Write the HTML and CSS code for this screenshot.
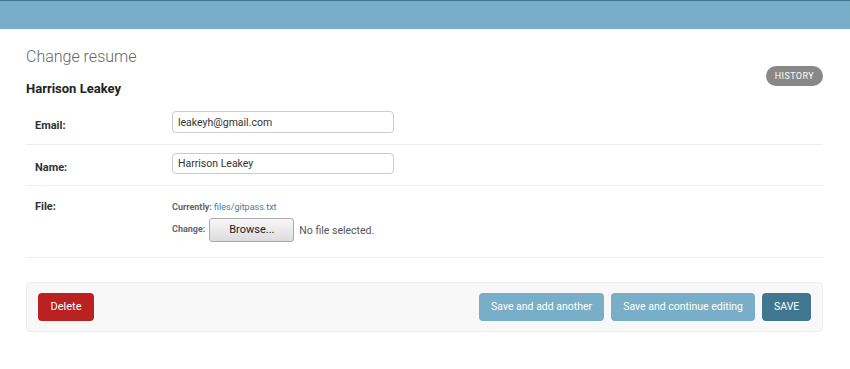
FILE: index.html
```html
<!DOCTYPE html>
<html>
<head>
<meta charset="utf-8">
<link rel="stylesheet" href="styles.css">
</head>
<body>
<div class="header"></div>
<div class="content">
  <h1 class="title">Change resume</h1>
  <div class="tools"><a class="history">History</a></div>
  <h2 class="subhead">Harrison Leakey</h2>
  <div class="fieldset">
    <div class="row">
      <label class="label">Email:</label>
      <input class="input" type="text" value="leakeyh@gmail.com">
    </div>
    <div class="row">
      <label class="label">Name:</label>
      <input class="input input-short" type="text" value="Harrison Leakey">
    </div>
    <div class="row row-file">
      <label class="label">File:</label>
      <div class="file">
        <div class="current"><span class="small-label">Currently:</span> <a class="link">files/gitpass.txt</a></div>
        <div class="change"><span class="small-label">Change:</span><span class="browse">Browse...</span><span class="nofile">No file selected.</span></div>
      </div>
    </div>
  </div>
  <div class="submit-row">
    <a class="btn delete">Delete</a>
    <div class="spacer"></div>
    <a class="btn light">Save and add another</a>
    <a class="btn light">Save and continue editing</a>
    <a class="btn dark">SAVE</a>
  </div>
</div>
</body>
</html>
```

FILE: styles.css
```css
html, body { margin: 0; padding: 0; background: #fff; }
body { font-family: Roboto, "Liberation Sans", sans-serif; color: #333; font-size: 10.5px; }
.header { height: 28px; background: #79aec8; border-top: 1px solid #417690; }
.content { padding: 0 27px 0 26px; position: relative; }
.title { margin: 0; padding-top: 16px; font-size: 16px; font-weight: 300; color: #666; line-height: 24px; }
.tools { position: absolute; right: 27px; top: 37px; }
.history { display: block; background: #888; color: #fff; font-size: 9px; font-weight: 400; letter-spacing: 0.4px; text-transform: uppercase; height: 20px; line-height: 20px; padding: 0 9px; border-radius: 12px; }
.subhead { margin: 11px 0 0; font-size: 13px; font-weight: 700; line-height: 18px; color: #222; }
.fieldset { margin-top: 5px; }
.row { display: flex; align-items: flex-start; padding: 8px 8px 11px 9px; border-bottom: 1px solid #eee; }
.label { width: 137px; font-size: 11px; font-weight: 700; color: #333; padding-top: 9px; line-height: 12px; }
.input { width: 222px; height: 22px; box-sizing: border-box; border: 1px solid #ccc; border-radius: 4px; padding: 0 5px; font-family: Roboto, "Liberation Sans", sans-serif; font-size: 10.5px; color: #333; margin: 0; }
.input-short { height: 21px; }
.row-file { padding-bottom: 15px; }
.row-file .label { padding-top: 7px; }
.file { padding-top: 7px; }
.current { font-size: 9px; line-height: 12px; color: #447e9b; }
.small-label { font-size: 9px; font-weight: 700; color: #666; }
.link { color: #447e9b; }
.change { display: flex; align-items: center; margin-top: 5px; }
.change .small-label { margin-top: -2px; margin-right: 4px; }
.browse { display: inline-block; width: 85px; height: 24px; box-sizing: border-box; line-height: 22px; text-align: center; border: 1px solid #aaa; border-radius: 3px; background: linear-gradient(#f8f8f8, #dcdcdc); font-size: 11px; color: #222; }
.nofile { margin-left: 5px; font-size: 10.5px; color: #555; }
.submit-row { display: flex; align-items: center; gap: 7px; margin-top: 24px; padding: 10px 11px; background: #f8f8f8; border: 1px solid #eee; border-radius: 4px; }
.spacer { flex: 1; }
.btn { display: block; height: 28px; line-height: 28px; border-radius: 4px; color: #fff; font-size: 10.5px; padding: 0 12px; }
.delete { background: #ba2121; width: 32px; text-align: center; font-size: 11px; }
.light { background: #79aec8; }
.dark { background: #417690; width: 25px; text-align: center; }
```
